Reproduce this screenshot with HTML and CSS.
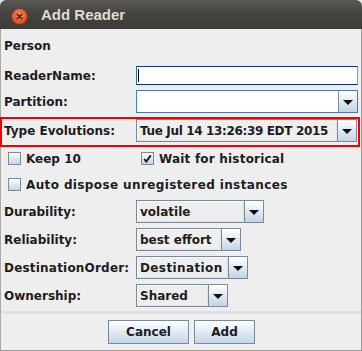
FILE: index.html
```html
<!DOCTYPE html>
<html>
<head>
<meta charset="utf-8">
<title>Add Reader</title>
<link rel="stylesheet" href="styles.css">
</head>
<body>
<div class="window">
  <div class="titlebar">
    <span class="close">
      <svg width="15" height="15" viewBox="0 0 15 15"><path d="M5.2 5.2 L9.8 9.8 M9.8 5.2 L5.2 9.8" stroke="#4a1a0c" stroke-width="1.4" stroke-linecap="round"/></svg>
    </span>
    <span class="title">Add Reader</span>
  </div>
  <div class="content">
    <div class="row row-person"><span class="label">Person</span></div>

    <div class="row row-field"><span class="label">ReaderName:</span>
      <div class="textfield focused"><span class="caret"></span></div>
    </div>

    <div class="row row-combo row-partition"><span class="label">Partition:</span>
      <div class="combo combo-full editable">
        <div class="combo-value"></div>
        <div class="arrow-btn"><svg width="10" height="5" viewBox="0 0 10 5"><polygon points="0,0 10,0 5,5" fill="#111"/></svg></div>
      </div>
    </div>

    <div class="row row-highlight"><span class="label">Type Evolutions:</span>
      <div class="combo combo-full">
        <div class="combo-value date-text">Tue Jul 14 13:26:39 EDT 2015</div>
        <div class="arrow-btn"><svg width="10" height="5" viewBox="0 0 10 5"><polygon points="0,0 10,0 5,5" fill="#111"/></svg></div>
      </div>
    </div>

    <div class="row row-check row-check1">
      <div class="check check-first"><span class="box"></span><span>Keep 10</span></div>
      <div class="check check-second"><span class="box"><svg width="11" height="11" viewBox="0 0 11 11"><path d="M2.2 6.2 L4.3 8.6 L8.8 2.4" fill="none" stroke="#111" stroke-width="1.8"/></svg></span><span class="wide-text-s">Wait for historical</span></div>
    </div>

    <div class="row row-check row-check2">
      <div class="check check-first"><span class="box"></span><span class="wide-text">Auto dispose unregistered instances</span></div>
    </div>

    <div class="row row-combo row-first"><span class="label">Durability:</span>
      <div class="combo combo-durability">
        <div class="combo-value">volatile</div>
        <div class="arrow-btn"><svg width="10" height="5" viewBox="0 0 10 5"><polygon points="0,0 10,0 5,5" fill="#111"/></svg></div>
      </div>
    </div>

    <div class="row row-combo"><span class="label">Reliability:</span>
      <div class="combo combo-reliability">
        <div class="combo-value">best effort</div>
        <div class="arrow-btn"><svg width="10" height="5" viewBox="0 0 10 5"><polygon points="0,0 10,0 5,5" fill="#111"/></svg></div>
      </div>
    </div>

    <div class="row row-combo"><span class="label wide-text-s">DestinationOrder:</span>
      <div class="combo combo-destination">
        <div class="combo-value wide-text">Destination</div>
        <div class="arrow-btn"><svg width="10" height="5" viewBox="0 0 10 5"><polygon points="0,0 10,0 5,5" fill="#111"/></svg></div>
      </div>
    </div>

    <div class="row row-combo"><span class="label">Ownership:</span>
      <div class="combo combo-ownership">
        <div class="combo-value">Shared</div>
        <div class="arrow-btn"><svg width="10" height="5" viewBox="0 0 10 5"><polygon points="0,0 10,0 5,5" fill="#111"/></svg></div>
      </div>
    </div>

    <div class="separator"></div>

    <div class="buttons">
      <button class="btn btn-cancel">Cancel</button>
      <button class="btn btn-add">Add</button>
    </div>
  </div>
</div>
</body>
</html>
```

FILE: styles.css
```css
* { box-sizing: border-box; margin: 0; padding: 0; }

html, body {
  width: 362px;
  height: 351px;
  overflow: hidden;
}

body {
  background: #ecebe9;
  font-family: "DejaVu Sans", sans-serif;
  font-size: 12px;
  font-weight: bold;
  color: #1c1c22;
}

.window {
  width: 362px;
  height: 351px;
  display: flex;
  flex-direction: column;
}

.titlebar {
  height: 29px;
  flex: none;
  background: linear-gradient(#5a5954, #45443f 45%, #3c3b37);
  border-radius: 6px 6px 0 0;
  display: flex;
  align-items: center;
  padding-left: 12px;
}

.close {
  width: 15px;
  height: 15px;
  margin-top: 4px;
  border-radius: 50%;
  background: radial-gradient(circle at 50% 35%, #f7895a, #e4582a 60%, #c9441c);
  box-shadow: 0 0 0 0.5px #a83a18;
  display: flex;
}

.title {
  margin-left: 14px;
  font-family: "Liberation Sans", sans-serif;
  font-size: 15px;
  font-weight: bold;
  color: #dfdbd2;
}

.content {
  flex: 1;
  background: #eeeeee;
  border-left: 1px solid #a7a7a5;
  border-right: 1px solid #9a9a98;
  border-bottom: 1px solid #9a9a98;
  padding-top: 7px;
  display: flex;
  flex-direction: column;
}

.row {
  display: flex;
  align-items: center;
  padding-left: 3px;
  flex: none;
}

.label {
  width: 132px;
  flex: none;
  white-space: nowrap;
}

.wide-text { letter-spacing: 0.38px; }
.wide-text-s { letter-spacing: 0.2px; }
.date-text { letter-spacing: -0.35px; }

.row-person { height: 20px; }

.row-field { height: 19px; margin-top: 10px; }

.row-combo { height: 23px; margin-top: 5px; }

.row-partition { margin-top: 5px; }

.row-first { margin-top: 8px; }

.row-highlight {
  margin-top: 4px;
  margin-left: -1px;
  width: 360px;
  height: 30px;
  border: 2px solid #f40000;
  padding-left: 2px;
  padding-bottom: 3px;
  align-items: flex-start;
}

.row-highlight .label {
  height: 23px;
  display: flex;
  align-items: center;
}

.textfield {
  width: 222px;
  height: 19px;
  background: #ffffff;
  border: 1px solid #8090a0;
  display: flex;
  align-items: center;
}

.textfield.focused {
  border-top-color: #0d2b93;
  border-bottom-color: #0d2b93;
  border-left-color: #1e7f8c;
  border-right-color: #8a9aa8;
}

.caret {
  width: 1px;
  height: 13px;
  margin-left: 1px;
  background: #000;
}

.combo {
  height: 23px;
  display: flex;
  border: 1px solid #7a8a99;
  background: #eeeeee;
}

.combo-full { width: 221px; }
.row-partition .combo-full { width: 222px; }
.combo-durability { width: 128px; }
.combo-reliability { width: 105px; }
.combo-destination { width: 112px; }
.combo-ownership { width: 92px; }

.combo-value {
  flex: 1;
  display: flex;
  align-items: center;
  padding-left: 2px;
  white-space: nowrap;
  overflow: hidden;
  border: 1px solid #f6f6f6;
  border-right-color: #e4e4e4;
  border-bottom-color: #e4e4e4;
}

.combo.editable {
  border-color: #4e79a6;
  border-left-color: #3a8f96;
}

.combo.editable .combo-value {
  background: #ffffff;
  border-color: #ffffff;
}

.arrow-btn {
  width: 19px;
  flex: none;
  border-left: 1px solid #7a8a99;
  background: linear-gradient(#ffffff, #e6eef6 40%, #c3d4e6);
  display: flex;
  align-items: center;
  justify-content: center;
  padding-top: 1px;
}

.row-check { height: 15px; padding-left: 0; }
.row-check1 { margin-top: 4px; }
.row-check2 { margin-top: 11px; }

.check {
  display: flex;
  align-items: center;
  white-space: nowrap;
}

.check-first { width: 136px; padding-left: 7px; }
.check-second { padding-left: 4px; }

.box {
  width: 13px;
  height: 13px;
  margin-right: 5px;
  border: 1px solid #7a8a99;
  background: linear-gradient(#ffffff, #e3ebf4 45%, #c4d4e6);
  display: flex;
  align-items: center;
  justify-content: center;
  flex: none;
}

.separator {
  height: 3px;
  margin-top: 4px;
  background: #dfdfdf;
  flex: none;
}

.buttons {
  margin-top: 6px;
  display: flex;
  justify-content: center;
  gap: 5px;
  padding-left: 1px;
}

.btn {
  height: 24px;
  border: 1px solid #7a8a99;
  background: linear-gradient(#ffffff, #eaf0f7 35%, #c5d6e8);
  font-family: "DejaVu Sans", sans-serif;
  font-size: 12px;
  font-weight: bold;
  color: #1c1c22;
}

.btn-cancel { width: 81px; }
.btn-add { width: 61px; }
```
